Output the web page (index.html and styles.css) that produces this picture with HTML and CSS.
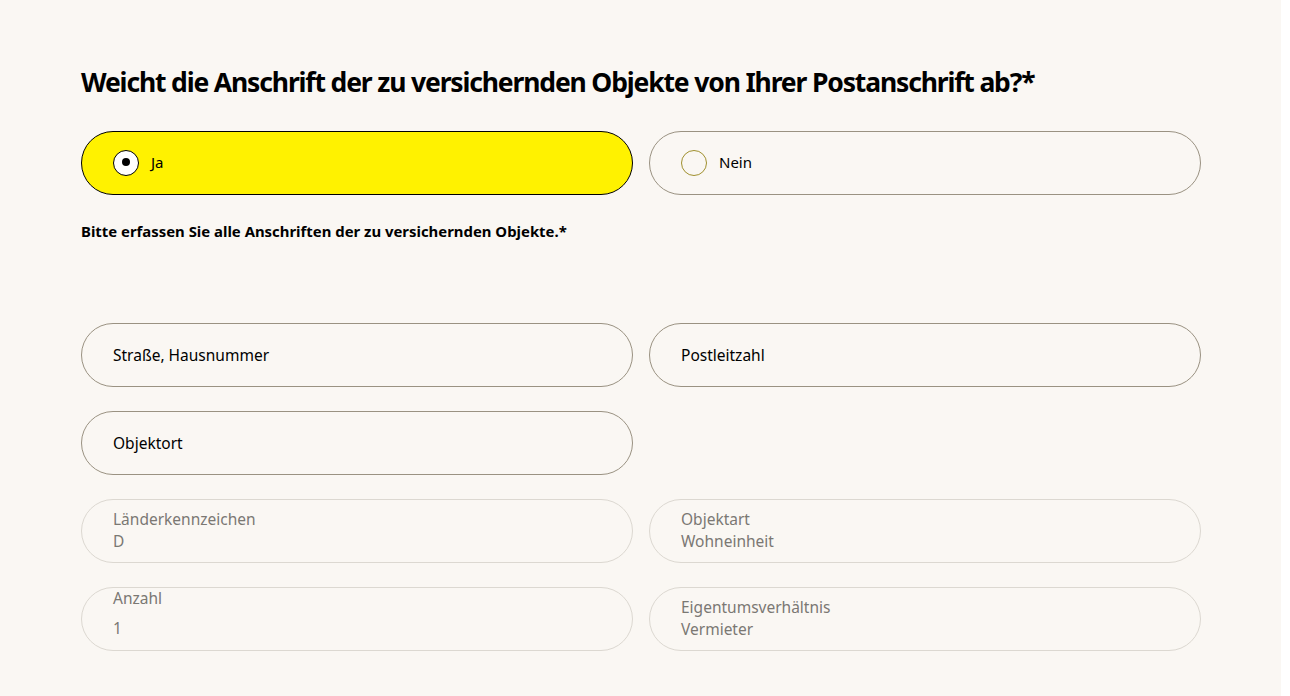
FILE: index.html
```html
<!DOCTYPE html>
<html lang="de">
<head>
<meta charset="utf-8">
<title>Anschrift</title>
<link rel="stylesheet" href="styles.css">
</head>
<body>
<main class="page">
  <h1 class="question">Weicht die Anschrift der zu versichernden Objekte von Ihrer Postanschrift ab?*</h1>
  <div class="grid choices">
    <label class="choice selected"><span class="radio"><span class="dot"></span></span><span>Ja</span></label>
    <label class="choice"><span class="radio empty"></span><span>Nein</span></label>
  </div>
  <p class="hint">Bitte erfassen Sie alle Anschriften der zu versichernden Objekte.*</p>
  <div class="grid fields">
    <div class="field"><span class="ph">Straße, Hausnummer</span></div>
    <div class="field"><span class="ph">Postleitzahl</span></div>
    <div class="field"><span class="ph">Objektort</span></div>
    <div></div>
    <div class="field disabled"><span class="lbl">Länderkennzeichen</span><span class="val">D</span></div>
    <div class="field disabled"><span class="lbl">Objektart</span><span class="val">Wohneinheit</span></div>
    <div class="field disabled top"><span class="lbl">Anzahl</span><span class="val">1</span></div>
    <div class="field disabled"><span class="lbl">Eigentumsverhältnis</span><span class="val">Vermieter</span></div>
  </div>
</main>
</body>
</html>
```
FILE: styles.css
```css
html, body {
  margin: 0;
  padding: 0;
  background: #ffffff;
  height: 100%;
}
body {
  font-family: "Noto Sans", "Liberation Sans", sans-serif;
  color: #000;
}
.page {
  width: 1281px;
  min-height: 696px;
  box-sizing: border-box;
  background: #faf7f3;
  padding: 62px 0 0 81px;
}
.question {
  margin: 0;
  font-size: 26.5px;
  line-height: 40px;
  font-weight: 700;
  letter-spacing: -1.15px;
}
.grid {
  display: grid;
  grid-template-columns: 552px 552px;
  column-gap: 16px;
}
.choices {
  margin-top: 29px;
}
.choice {
  height: 64px;
  box-sizing: border-box;
  border: 1px solid #9a9282;
  border-radius: 32px;
  display: flex;
  align-items: center;
  padding-left: 31px;
  gap: 12px;
  font-size: 15px;
  line-height: 20px;
}
.choice span:last-child {
  margin-top: -3px;
}
.choice.selected {
  background: #fff200;
  border-color: #000;
}
.radio {
  width: 26px;
  height: 26px;
  box-sizing: border-box;
  border-radius: 50%;
  border: 1px solid #000;
  background: #fff;
  display: flex;
  align-items: center;
  justify-content: center;
}
.radio.empty {
  background: transparent;
  border-color: #a0902e;
}
.dot {
  width: 8px;
  height: 8px;
  border-radius: 50%;
  background: #000;
}
.hint {
  margin: 26px 0 0;
  font-size: 14.9px;
  font-weight: 700;
  line-height: 20px;
}
.fields {
  margin-top: 82px;
  row-gap: 24px;
}
.field {
  height: 64px;
  box-sizing: border-box;
  border: 1px solid #9a9282;
  border-radius: 32px;
  display: flex;
  flex-direction: column;
  justify-content: center;
  padding-left: 31px;
  font-size: 15.5px;
  line-height: 22px;
}
.field.disabled {
  border-color: #dcd8d1;
  color: #7b7873;
}
.field.disabled .lbl {
  margin-top: -3px;
}
.field.top {
  justify-content: flex-start;
}
.field.top .lbl {
  line-height: 20px;
  margin-top: 0;
}
.field.top .val {
  margin-top: 9px;
}
```
